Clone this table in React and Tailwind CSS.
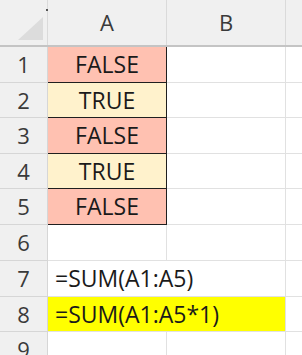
const rows = [
  { n: 1, h: 36, a: 'FALSE', kind: 'false' },
  { n: 2, h: 35, a: 'TRUE', kind: 'true' },
  { n: 3, h: 36, a: 'FALSE', kind: 'false' },
  { n: 4, h: 35, a: 'TRUE', kind: 'true' },
  { n: 5, h: 36, a: 'FALSE', kind: 'false' },
  { n: 6, h: 36, a: '', kind: 'empty' },
  { n: 7, h: 36, a: '=SUM(A1:A5)', kind: 'formula' },
  { n: 8, h: 35, a: '=SUM(A1:A5*1)', kind: 'yellow' },
  { n: 9, h: 36, a: '', kind: 'empty' },
];

const font = { fontFamily: '"Open Sans", "Noto Sans", sans-serif' };

function Row({ row }) {
  const boxed = row.kind === 'false' || row.kind === 'true';
  const fill = row.kind === 'false' ? 'bg-[#ffc1b1]' : row.kind === 'true' ? 'bg-[#fff2cc]' : 'bg-white';
  const heightClass = row.h === 36 ? 'h-[36px]' : 'h-[35px]';
  const spansAB = row.kind === 'yellow' || row.kind === 'formula';

  return (
    <div className={`flex ${heightClass}`}>
      <div className="w-[48px] shrink-0 flex items-center justify-center bg-[#f0f0f0] border-r border-b border-[#d6d6d6] text-[22px] text-[#3a3a3a]">
        {row.n}
      </div>
      {spansAB ? (
        <div
          className={`w-[238px] shrink-0 flex items-center border-r border-b border-[#e1e1e1] pl-[7px] text-[23px] text-[#1a1a1a] whitespace-nowrap ${
            row.kind === 'yellow' ? 'bg-[#ffff00]' : 'bg-white'
          }`}
        >
          {row.a}
        </div>
      ) : (
        <>
          <div
            className={`w-[119px] shrink-0 flex items-center justify-center text-[23px] text-[#1a1a1a] border-r border-b ${fill} ${
              boxed ? 'border-[#1f1f1f]' : 'border-[#e1e1e1]'
            }`}
          >
            {row.a}
          </div>
          <div className="w-[119px] shrink-0 bg-white border-r border-b border-[#e1e1e1]" />
        </>
      )}
      <div className="flex-1 bg-white border-b border-[#e1e1e1]" />
    </div>
  );
}

export default function App() {
  return (
    <div className="w-[302px] h-[355px] overflow-hidden bg-white" style={font}>
      {/* column headers */}
      <div className="flex h-[47px] bg-[#f0f0f0] border-b-2 border-[#c4c4c4]">
        <div className="relative w-[48px] shrink-0 border-r border-[#dadada]">
          <svg className="absolute left-0 top-0" width="48" height="45" viewBox="0 0 48 45">
            <polygon points="43,17 43,40 18,40" fill="#dcdcdc" />
          </svg>
          <div className="absolute right-[-1px] top-[9px] w-[2px] h-[2px] bg-[#555]" />
        </div>
        <div className="w-[119px] shrink-0 flex items-center justify-center border-r border-[#dadada] text-[22px] text-[#3a3a3a]">
          A
        </div>
        <div className="w-[119px] shrink-0 flex items-center justify-center border-r border-[#dadada] text-[22px] text-[#3a3a3a]">
          B
        </div>
        <div className="flex-1" />
      </div>
      {rows.map((r) => (
        <Row key={r.n} row={r} />
      ))}
    </div>
  );
}
